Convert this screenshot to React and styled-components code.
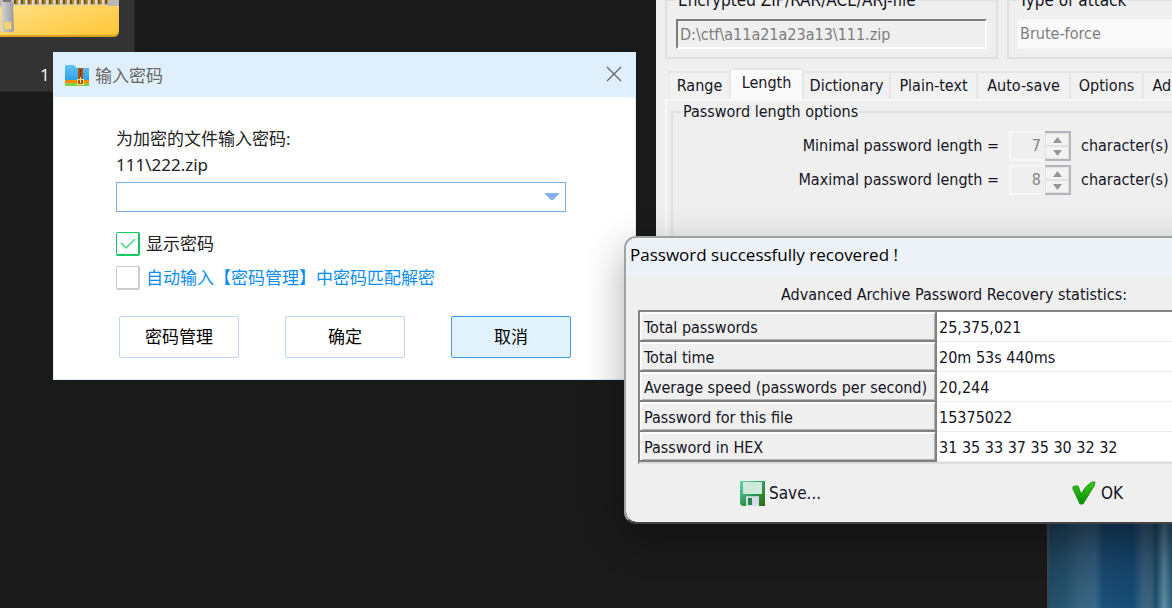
import React from "react";
import styled, { createGlobalStyle } from "styled-components";

const SHELL_FONT = '"Open Sans", "Noto Sans CJK SC", sans-serif';
const HAN_FONT = '"Noto Sans", "Noto Sans CJK SC", sans-serif';
const FORM_FONT = '"DejaVu Sans Condensed", "DejaVu Sans", sans-serif';

const GlobalStyle = createGlobalStyle`
  * { box-sizing: border-box; }
  html, body, #root { height: 100%; }
  body { margin: 0; background: #1a1a1a; overflow: hidden; }
  button, input, select { font: inherit; color: inherit; }
`;

const Desktop = styled.main`
  position: relative;
  min-height: 100%;
  overflow: hidden;
  background: #1a1a1a;
`;

/* file tile */
const FileTile = styled.div`
  position: absolute;
  top: 0;
  left: 0;
  width: 135px;
  height: 92px;
  background: #333;
  border: solid #2a2a2a;
  border-width: 0 1px 1px 0;
  display: flex;
  flex-direction: column;
  justify-content: space-between;
  padding-bottom: 4px;
  color: #fff;
  font: 17px/24px ${SHELL_FONT};
  svg { display: block; }
`;
const FileName = styled.span`
  padding-left: 40px;
`;

const Wallpaper = styled.div`
  position: absolute;
  top: 500px;
  right: 0;
  bottom: 0;
  width: 125px;
  border-left: 2px solid #3a434b;
  background:
    linear-gradient(180deg, rgba(10, 20, 40, 0.4) 24px, rgba(20, 80, 120, 0.05) 100%),
    linear-gradient(90deg, #24506c 0, #28566f 16px, #3a6580 30px, #3b6a8c 46px, #1d5078 54px, #174d76 84px, #3f6683 94px, #3d6582 102px, #1f4f6c 107px, #6391a6 115px, #2c5f7b 123px);
`;

/* archive tool window */
const ToolWindow = styled.section`
  position: absolute;
  top: -10px;
  left: 656px;
  right: -100px;
  height: 440px;
  padding: 0 9px;
  background: #efefef;
  color: #15151f;
  font: 16px/20px ${FORM_FONT};
`;
const TopRow = styled.div`
  display: flex;
  gap: 9px;
`;
const Group = styled.fieldset`
  margin: 0;
  min-width: 0;
  border: 2px solid #e0e0e0;
  padding: 9px 9px 8px;
  ${(p) => (p.$wide ? "flex: 1; padding-left: 8px;" : "")}
  ${(p) => (p.$width ? `width: ${p.$width}px;` : "")}
`;
const Legend = styled.legend`
  padding: 0 2px;
  font-size: ${(p) => (p.$large ? 17 : 16)}px;
`;
const PathInput = styled.input`
  display: block;
  width: 100%;
  height: 30px;
  padding: 0 2px;
  border: 2px solid;
  border-color: #7c7c7c #fbfbfb #fbfbfb #7c7c7c;
  border-radius: 0;
  background: #efefef;
  color: #7d7d7d;
`;
const AttackSelect = styled.select`
  appearance: none;
  display: block;
  width: 100%;
  height: 30px;
  padding: 0 2px;
  border: 1px solid #f4f4f4;
  border-radius: 0;
  background: #fafafa;
  color: #7d7d7d;
`;
const Tabs = styled.div`
  display: flex;
  align-items: flex-end;
  margin-top: 9px;
  padding-left: 4px;
`;
const Tab = styled.button`
  flex: none;
  width: ${(p) => p.$width}px;
  height: ${(p) => (p.$active ? 31 : 28)}px;
  padding: 0 0 ${(p) => (p.$active ? 3 : 0)}px;
  border: solid #e6e6e6;
  border-width: 2px 1px 0;
  background: ${(p) => (p.$active ? "#fafafa" : "#f1f1f1")};
  white-space: nowrap;
`;
const TabPanel = styled.div`
  border: 2px solid #f8f8f8;
  border-width: 2px 0 0 2px;
  padding: 1px 4px;
`;
const LengthGroup = styled(Group)`
  height: 260px;
  padding: 7px 8px;
`;
const LengthRow = styled.div`
  display: flex;
  align-items: center;
  height: 34px;
  gap: 10px;
`;
const LengthLabel = styled.label`
  width: 318px;
  text-align: right;
  white-space: nowrap;
`;
const Spinner = styled.span`
  display: flex;
  width: 62px;
  height: 30px;
`;
const SpinInput = styled.input`
  width: 36px;
  min-width: 0;
  padding: 0 4px 0 0;
  border: 2px solid #f7f7f7;
  border-right: 0;
  border-radius: 0;
  background: #efefef;
  color: #858585;
  text-align: right;
`;
const SpinButtons = styled.span`
  flex: 1;
  display: flex;
  flex-direction: column;
  border: 2px solid #b4b5ba;
  border-left: 0;
`;
const SpinButton = styled.button`
  flex: 1;
  display: flex;
  align-items: center;
  justify-content: center;
  padding: 0;
  border: 1px solid #e2e2e2;
  background: #f3f3f3;
`;

/* recovery result dialog */
const ResultDialog = styled.section`
  position: absolute;
  top: 236px;
  left: 624px;
  right: -112px;
  height: 288px;
  border: 2px solid #9fa1a3;
  border-bottom-color: #444;
  border-radius: 12px;
  background: #efefef;
  background-clip: padding-box;
  box-shadow: 0 14px 40px rgba(0, 0, 0, 0.32);
  overflow: hidden;
  color: #15151f;
  font: 16px/20px ${FORM_FONT};
`;
const ResultTitle = styled.h2`
  margin: 0;
  height: 37px;
  padding: 0 4px;
  background: #edf2f9;
  color: #000;
  font: 17px/34px ${SHELL_FONT};
`;
const StatsTable = styled.table`
  width: calc(100% - 24px);
  margin: 0 12px;
  border-collapse: separate;
  border-spacing: 0;
  table-layout: fixed;
  border: 2px solid #858585;
  border-bottom-color: #dcdcdc;
  background: #fff;
  caption {
    height: 35px;
    padding-top: 10px;
    white-space: nowrap;
  }
  th, td {
    height: 30px;
    padding: 3px 2px 0;
    font-weight: 400;
    text-align: left;
    white-space: nowrap;
  }
  th {
    width: 297px;
    padding-left: 4px;
    background: #efefef;
    border: solid #808080;
    border-width: 0 2px 2px 0;
    box-shadow: inset 2px 2px #fcfcfc, inset -1px -1px #b5b5b5;
  }
  td { border-bottom: 1px solid #ededed; }
`;
const Actions = styled.div`
  display: flex;
  padding: 14px 114px;
`;
const ActionSlot = styled.div`
  width: 332px;
`;
const FlatButton = styled.button`
  display: flex;
  align-items: center;
  gap: 4px;
  height: 30px;
  padding: 0;
  border: 0;
  background: transparent;
  font-size: 17px;
`;

/* password prompt */
const Prompt = styled.section`
  position: absolute;
  top: 52px;
  left: 53px;
  width: 583px;
  min-height: 328px;
  border: solid #dcecf8;
  border-width: 0 1px 1px;
  background: #fff;
  color: #222;
  font: 17px/26px ${HAN_FONT};
`;
const PromptHeader = styled.header`
  display: flex;
  align-items: center;
  gap: 6px;
  height: 45px;
  padding: 2px 11px 0;
  background: #e0effc;
  color: #666;
`;
const PromptTitle = styled.h1`
  flex: 1;
  margin: 0;
  font-size: 17px;
  font-weight: 400;
`;
const CloseButton = styled.button`
  display: flex;
  width: 20px;
  height: 24px;
  padding: 0 0 4px;
  border: 0;
  background: none;
  align-items: center;
  justify-content: center;
`;
const PromptBody = styled.form`
  padding: 29px 62px 21px;
`;
const FieldLabel = styled.label`
  display: block;
`;
const Combo = styled.div`
  display: flex;
  height: 30px;
  margin: 4px 7px 0 0;
  border: 1px solid #72b3ef;
`;
const ComboInput = styled.input`
  flex: 1;
  min-width: 0;
  border: 0;
  padding: 0 6px;
  background: none;
  outline: 0;
`;
const ComboButton = styled.button`
  width: 26px;
  padding: 0;
  border: 0;
  background: none;
  display: flex;
  align-items: center;
  justify-content: center;
`;
const Checks = styled.div`
  display: grid;
  gap: 10px;
  margin-top: 20px;
`;
const CheckRow = styled.label`
  display: flex;
  align-items: center;
  gap: 6px;
  height: 24px;
  color: ${(p) => (p.$link ? "#0a8df5" : "#222")};
`;
const CheckMark = styled.span`
  display: grid;
  width: 24px;
  height: 24px;
  > * { grid-area: 1 / 1; }
  svg { pointer-events: none; place-self: center; }
`;
const CheckBox = styled.input`
  appearance: none;
  margin: 0;
  width: 24px;
  height: 24px;
  border: solid #cbcbcb;
  border-width: 1px 2px 2px 1px;
  border-radius: 2px;
  background: #fff;
  &:checked { border-color: #11c964; }
`;
const PromptButtons = styled.div`
  display: flex;
  gap: 46px;
  margin: 26px 0 0 3px;
`;
const PromptButton = styled.button`
  width: 120px;
  height: 42px;
  padding: 0;
  border: 1px solid ${(p) => (p.$active ? "#3d9be9" : "#bcd7f3")};
  border-radius: 2px;
  background: ${(p) => (p.$active ? "#e2f2fd" : "#fff")};
  color: #000;
`;

const TEETH = Array.from({ length: 14 }, (_, i) => 14 + i * 7);

function ZipFolder() {
  return (
    <svg width="120" height="38" viewBox="0 0 120 38" aria-hidden="true">
      <defs>
        <linearGradient id="folder" x1="0" y1="0" x2="1" y2="1">
          <stop offset="0" stopColor="#ffe18c" />
          <stop offset="1" stopColor="#ffc636" />
        </linearGradient>
        <linearGradient id="pull" x1="0" y1="0" x2="1" y2="0">
          <stop offset="0" stopColor="#d6d6d6" />
          <stop offset="1" stopColor="#9a9a9a" />
        </linearGradient>
      </defs>
      <path d="M0 0H119V31Q119 37 113 37H0Z" fill="#dd9f22" />
      <path d="M0 0H119V30Q118 35 112 35H0Z" fill="url(#folder)" />
      <rect x="0" y="0" width="110" height="5" fill="#b9b4aa" />
      {TEETH.map((x) => (
        <g key={x}>
          <rect x={x} y="0" width="4" height="4" fill="#7a540c" />
          <rect x={x + 2} y="0" width="2" height="4" fill="#b98a2c" />
          <rect x={x + 4} y="0" width="2" height="5" fill="#d8d5cf" />
        </g>
      ))}
      <rect x="108" y="0" width="11" height="6" fill="#b9b9b9" />
      <path d="M0 0H14V7H0Z" fill="#bdbdbd" />
      <path d="M3 0H11V3H3Z" fill="#777" />
      <path d="M2 2H13L14 30Q14 32 12 32H3Q1 32 1 30Z" fill="url(#pull)" />
      <rect x="4" y="22" width="7" height="7" fill="#ffd76c" stroke="#d9c48c" />
    </svg>
  );
}

function ArchiveLogo() {
  return (
    <svg width="24" height="21" viewBox="0 0 24 21" aria-hidden="true">
      <defs>
        <linearGradient id="logoBlue" x1="0" y1="0" x2="0" y2="1">
          <stop offset="0" stopColor="#63c4f8" />
          <stop offset="1" stopColor="#2f9fea" />
        </linearGradient>
      </defs>
      <path d="M0 0H9L12 3H24V15H0Z" fill="url(#logoBlue)" />
      <rect y="15" width="24" height="3" fill="#ff8a00" />
      <rect y="18" width="24" height="3" fill="#7fd043" />
      <rect x="13" y="3" width="5" height="17" fill="#a9510f" />
      <path d="M15 5h1v2h-1zM15 8h1v2h-1zM15 11h1v2h-1z" fill="#5d2a05" />
      <rect x="12.5" y="14.5" width="6" height="5" fill="#b4540b" stroke="#ffe58a" />
      <path d="M15 12h1v6h-1z" fill="#ffe9a0" />
    </svg>
  );
}

function DiskIcon() {
  return (
    <svg width="25" height="25" viewBox="0 0 25 25" aria-hidden="true">
      <defs>
        <linearGradient id="disk" x1="0" y1="0" x2="1" y2="1">
          <stop offset="0" stopColor="#68d8b0" />
          <stop offset="0.5" stopColor="#2f9c5c" />
          <stop offset="1" stopColor="#2f6a08" />
        </linearGradient>
      </defs>
      <path d="M0 0H25V25H2L0 23Z" fill="url(#disk)" />
      <rect x="3" y="1" width="19" height="12" fill="#cfe9da" />
      <path d="M6 16H19V25H6Z" fill="#d9dce8" />
      <rect x="8" y="17" width="4" height="7" fill="#27884b" />
      <rect x="6" y="15" width="13" height="1" fill="#a6d6b5" />
    </svg>
  );
}

function OkIcon() {
  return (
    <svg width="25" height="25" viewBox="0 0 25 25" aria-hidden="true">
      <defs>
        <linearGradient id="tick" x1="0" y1="0" x2="0" y2="1">
          <stop offset="0" stopColor="#3fca1d" />
          <stop offset="1" stopColor="#078b08" />
        </linearGradient>
      </defs>
      <path d="M1 8Q0 5 3 5H6L9 13Q14 4 20 1L23 1L22 5L11 23H8Z" fill="url(#tick)" stroke="#1c941a" strokeWidth="1" strokeLinejoin="round" />
    </svg>
  );
}

const TABS = [
  ["Range", 61],
  ["Length", 73],
  ["Dictionary", 87],
  ["Plain-text", 87],
  ["Auto-save", 93],
  ["Options", 73],
  ["Advanced", 90],
];

const STATS = [
  ["Total passwords", "25,375,021"],
  ["Total time", "20m 53s 440ms"],
  ["Average speed (passwords per second)", "20,244"],
  ["Password for this file", "15375022"],
  ["Password in HEX", "31 35 33 37 35 30 32 32"],
];

function LengthField({ id, label, value }) {
  return (
    <LengthRow>
      <LengthLabel htmlFor={id}>{label}</LengthLabel>
      <Spinner>
        <SpinInput id={id} defaultValue={value} inputMode="numeric" />
        <SpinButtons>
          <SpinButton type="button" aria-label="Increase">
            <svg width="9" height="6" viewBox="0 0 9 6"><path d="M0 6L4.500 0L9 6Z" fill="#969696" /></svg>
          </SpinButton>
          <SpinButton type="button" aria-label="Decrease">
            <svg width="9" height="6" viewBox="0 0 9 6"><path d="M0 0L4.500 6L9 0Z" fill="#969696" /></svg>
          </SpinButton>
        </SpinButtons>
      </Spinner>
      <span>character(s)</span>
    </LengthRow>
  );
}

export default function App() {
  return (
    <Desktop>
      <GlobalStyle />
      <FileTile>
        <ZipFolder />
        <FileName>1</FileName>
      </FileTile>
      <Wallpaper />

      <ToolWindow>
        <TopRow>
          <Group $width={333}>
            <Legend $large><label htmlFor="archive">Encrypted ZIP/RAR/ACE/ARJ-file</label></Legend>
            <PathInput id="archive" defaultValue="D:\ctf\a11a21a23a13\111.zip" />
          </Group>
          <Group $wide>
            <Legend $large><label htmlFor="attack">Type of attack</label></Legend>
            <AttackSelect id="attack"><option>Brute-force</option></AttackSelect>
          </Group>
        </TopRow>
        <Tabs role="tablist">
          {TABS.map(([name, width]) => (
            <Tab key={name} type="button" role="tab" aria-selected={name === "Length"} $width={width} $active={name === "Length"}>
              {name}
            </Tab>
          ))}
        </Tabs>
        <TabPanel role="tabpanel">
          <LengthGroup>
            <Legend>Password length options</Legend>
            <LengthField id="min" label="Minimal password length =" value="7" />
            <LengthField id="max" label="Maximal password length =" value="8" />
          </LengthGroup>
        </TabPanel>
      </ToolWindow>

      <Prompt>
        <PromptHeader>
          <ArchiveLogo />
          <PromptTitle>输入密码</PromptTitle>
          <CloseButton type="button" aria-label="关闭">
            <svg width="16" height="16" viewBox="0 0 16 16"><path d="M1 1L15 15M15 1L1 15" stroke="#666" strokeWidth="1.300" /></svg>
          </CloseButton>
        </PromptHeader>
        <PromptBody onSubmit={(e) => e.preventDefault()}>
          <FieldLabel htmlFor="password">为加密的文件输入密码:<br />111\222.zip</FieldLabel>
          <Combo>
            <ComboInput id="password" />
            <ComboButton type="button" aria-label="▼">
              <svg width="14" height="8" viewBox="0 0 14 8"><path d="M0 0H14V1L8 7H6L0 1Z" fill="#86b1ee" /></svg>
            </ComboButton>
          </Combo>
          <Checks>
            <CheckRow>
              <CheckMark>
                <CheckBox type="checkbox" defaultChecked />
                <svg width="16" height="12" viewBox="0 0 16 12"><path d="M1 5L6 10L15 1" fill="none" stroke="#3fd583" strokeWidth="1.500" /></svg>
              </CheckMark>
              显示密码
            </CheckRow>
            <CheckRow $link>
              <CheckMark><CheckBox type="checkbox" /></CheckMark>
              自动输入【密码管理】中密码匹配解密
            </CheckRow>
          </Checks>
          <PromptButtons>
            <PromptButton type="button">密码管理</PromptButton>
            <PromptButton type="submit">确定</PromptButton>
            <PromptButton type="button" $active>取消</PromptButton>
          </PromptButtons>
        </PromptBody>
      </Prompt>

      <ResultDialog role="dialog" aria-labelledby="result-title">
        <ResultTitle id="result-title">Password successfully recovered !</ResultTitle>
        <StatsTable>
          <caption>Advanced Archive Password Recovery statistics:</caption>
          <tbody>
            {STATS.map(([name, value]) => (
              <tr key={name}>
                <th scope="row">{name}</th>
                <td>{value}</td>
              </tr>
            ))}
          </tbody>
        </StatsTable>
        <Actions>
          <ActionSlot><FlatButton type="button"><DiskIcon />Save...</FlatButton></ActionSlot>
          <FlatButton type="button"><OkIcon />OK</FlatButton>
        </Actions>
      </ResultDialog>
    </Desktop>
  );
}
